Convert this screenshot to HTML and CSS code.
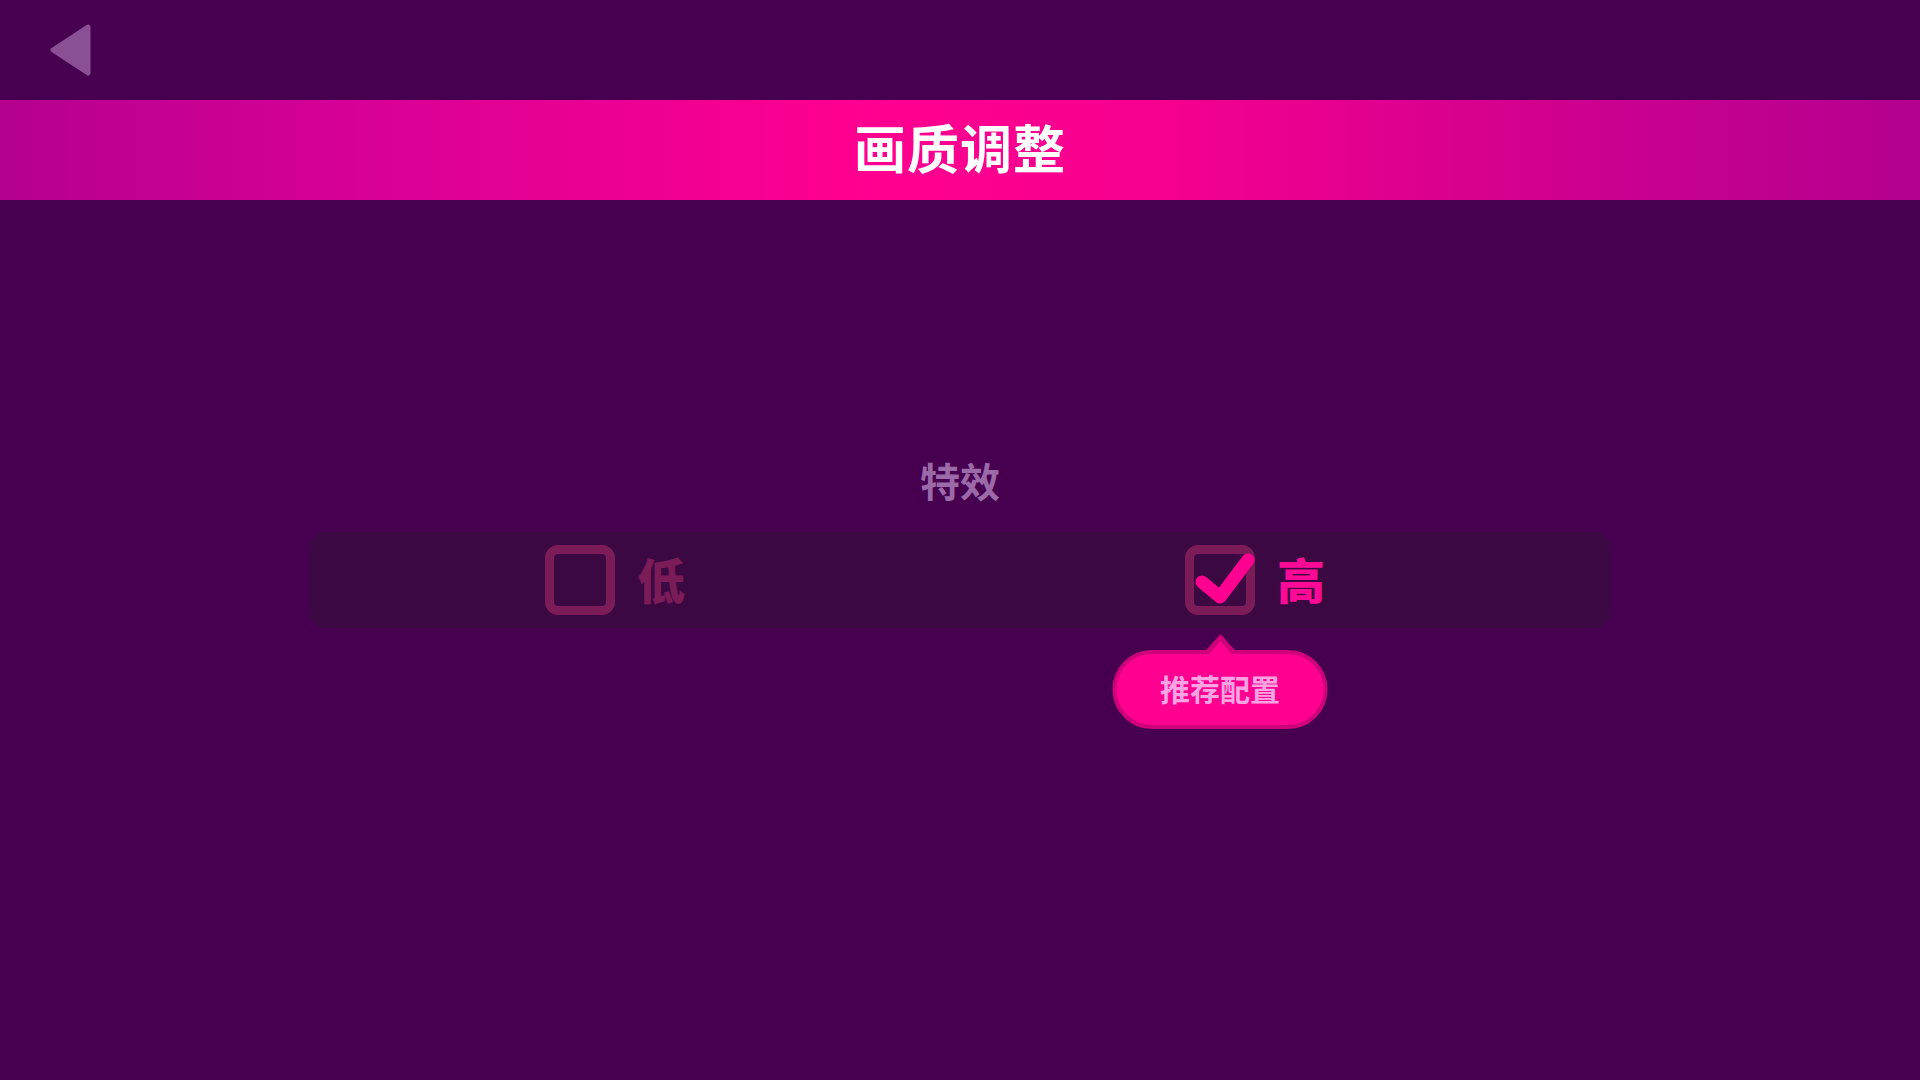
FILE: index.html
```html
<!DOCTYPE html>
<html lang="zh-CN">
<head>
    <meta charset="UTF-8">
    <meta name="viewport" content="width=device-width, initial-scale=1.0">
    <title>画质调整</title>
    <link rel="stylesheet" href="styles.css">
</head>
<body>
    <div class="topbar">
        <button class="back" aria-label="返回">
            <svg width="48" height="56" viewBox="0 0 48 56">
                <polygon points="41,5 6,28 41,51" fill="#8b4f95" stroke="#8b4f95" stroke-width="5" stroke-linejoin="round"/>
            </svg>
        </button>
    </div>

    <div class="banner">
        <h1>画质调整</h1>
    </div>

    <div class="settings">
        <div class="group-title">特效</div>
        <div class="options">
            <div class="option low">
                <span class="box"></span>
                <span class="label">低</span>
            </div>
            <div class="option high selected">
                <span class="box">
                    <svg class="tick" width="70" height="70" viewBox="0 0 70 70">
                        <polyline points="17,37 35,52 63,15" fill="none" stroke="#ff0090" stroke-width="13" stroke-linecap="round" stroke-linejoin="round"/>
                    </svg>
                    <span class="tip">推荐配置</span>
                </span>
                <span class="label">高</span>
            </div>
        </div>
    </div>
</body>
</html>
```

FILE: styles.css
```css
body {
    margin: 0;
    min-height: 100vh;
    background-color: #470050;
    font-family: "Noto Sans CJK SC", "Noto Sans", sans-serif;
}
.topbar {
    height: 100px;
    display: flex;
    align-items: center;
    padding-left: 47px;
}
.back {
    background: none;
    border: none;
    padding: 0;
    cursor: pointer;
    display: flex;
}
.banner {
    height: 100px;
    display: flex;
    align-items: center;
    justify-content: center;
    background: linear-gradient(90deg, #b5008f 0%, #da0096 20%, #ff0090 45%, #f7008f 60%, #c9008f 85%, #b5008f 100%);
}
h1 {
    margin: 0 0 7px;
    color: #fff;
    font-size: 52px;
    font-weight: 700;
    letter-spacing: 1px;
}
.settings {
    padding-top: 256px;
}
.group-title {
    text-align: center;
    color: #9c6aa8;
    font-size: 40px;
    font-weight: 700;
    line-height: 48px;
}
.options {
    width: 1300px;
    height: 96px;
    margin: 28px auto 0;
    background-color: #3b0842;
    border-radius: 16px;
    display: grid;
    grid-template-columns: 1fr 1fr;
}
.option {
    display: flex;
    align-items: center;
    gap: 22px;
}
.low {
    padding-left: 235px;
}
.high {
    padding-left: 225px;
}
.box {
    position: relative;
    width: 70px;
    height: 70px;
    box-sizing: border-box;
    border: 9px solid #7b1b58;
    border-radius: 13px;
}
.tick {
    position: absolute;
    left: -9px;
    top: -9px;
}
.label {
    margin-bottom: 4px;
    color: #7b1b58;
    font-size: 48px;
    font-weight: 900;
    line-height: 1;
}
.selected .label {
    color: #ff0a96;
}
.tip {
    position: absolute;
    top: 96px;
    left: 50%;
    transform: translateX(-50%);
    width: 215px;
    height: 79px;
    box-sizing: border-box;
    padding-bottom: 3px;
    border: 4px solid #d0007c;
    border-radius: 40px;
    background-color: #ff0090;
    color: #ffa3e2;
    font-size: 30px;
    font-weight: 700;
    display: flex;
    align-items: center;
    justify-content: center;
}
.tip::before {
    content: "";
    position: absolute;
    left: 88px;
    top: -20px;
    border: 16px solid transparent;
    border-top: 0;
    border-bottom: 18px solid #d0007c;
}
.tip::after {
    content: "";
    position: absolute;
    left: 92px;
    top: -13px;
    border: 12px solid transparent;
    border-top: 0;
    border-bottom: 14px solid #ff0090;
}
```
